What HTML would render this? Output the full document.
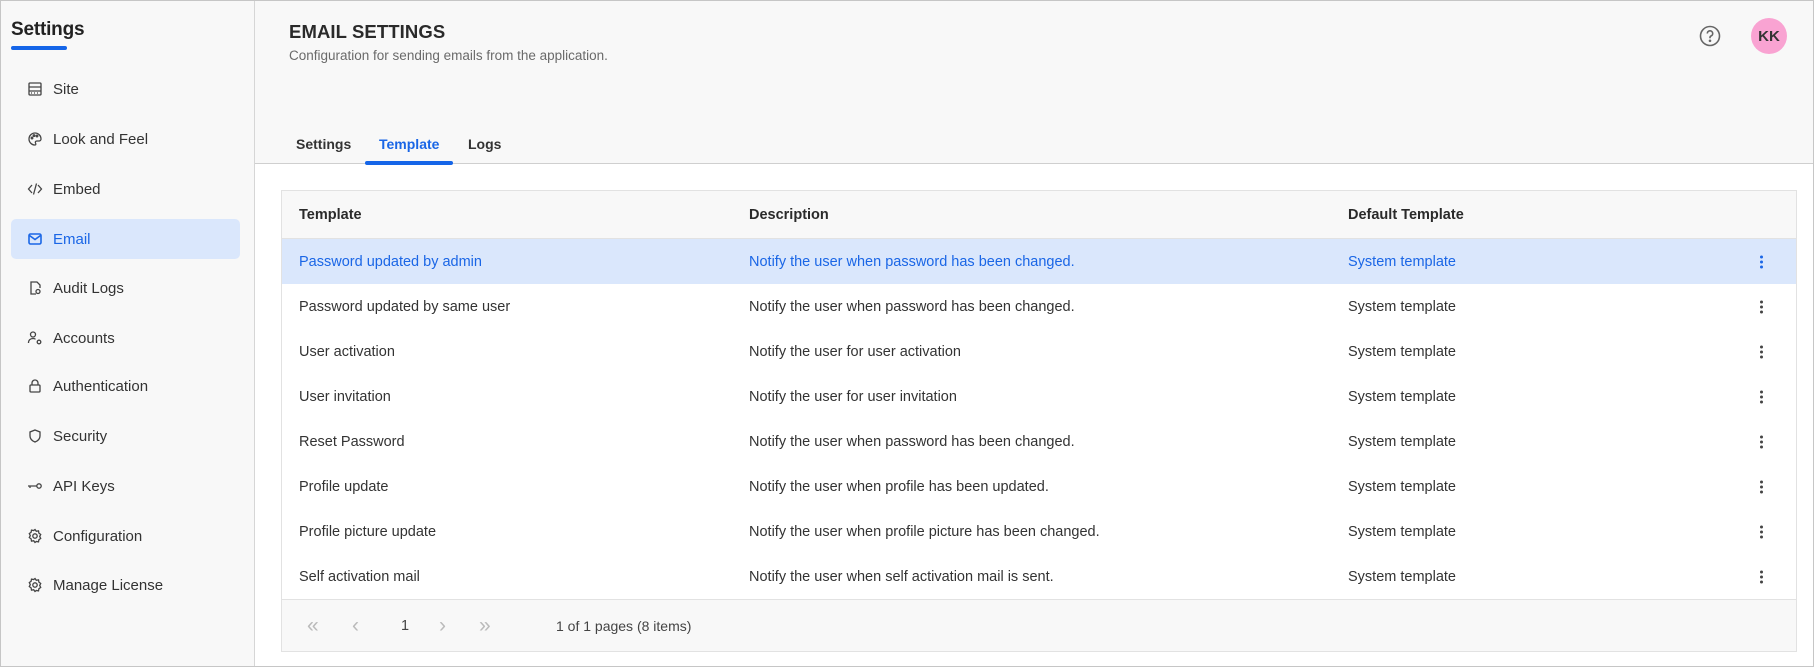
<!DOCTYPE html>
<html><head><meta charset="utf-8"><style>
*{box-sizing:border-box;margin:0;padding:0}
body{width:1814px;height:667px;overflow:hidden;font-family:"Liberation Sans",sans-serif;color:#333;background:#fff;position:relative}
.frame{position:absolute;left:0;top:0;width:1814px;height:667px;border:1px solid #c6c6c6;z-index:10;pointer-events:none}
.side{position:absolute;left:0;top:0;width:255px;height:667px;background:#f8f8f8;border-right:1px solid #d6d6d6}
.side h1{position:absolute;left:11px;top:19px;font-size:19px;font-weight:bold;color:#222;letter-spacing:-.2px}
.uline{position:absolute;left:11px;top:46px;width:56px;height:4px;border-radius:2px;background:#1565e8}
.nav{position:absolute;left:11px;width:229px;height:40px;display:flex;align-items:center;font-size:15px;color:#333}
.nav svg{position:absolute;left:16px;width:16px;height:16px}
.nav span{position:absolute;left:42px}
.nav.act{background:#dae7fc;border-radius:5px;color:#1a66e6}
.head{position:absolute;left:255px;top:0;width:1559px;height:164px;background:#f8f8f8;border-bottom:1px solid #cfcfcf}
.title{position:absolute;left:289px;top:21px;font-size:18.5px;font-weight:bold;color:#2a2a2a;letter-spacing:.1px}
.sub{position:absolute;left:289px;top:48px;font-size:13.5px;color:#6a6a6a}
.tab{position:absolute;top:136px;font-size:14px;font-weight:bold;color:#333}
.tabline{position:absolute;left:365px;top:161px;width:88px;height:4px;border-radius:2px;background:#1565e8}
.tbl{position:absolute;left:281px;top:190px;width:1516px;height:462px;border:1px solid #e2e2e2}
.th{position:absolute;left:0;top:0;width:100%;height:48px;background:#f8f8f8;border-bottom:1px solid #e2e2e2}
.row{position:absolute;left:0;width:100%;height:45px}
.c{position:absolute;top:50%;transform:translateY(-50%);font-size:14.5px;white-space:nowrap}
.th .c{font-weight:bold;color:#2a2a2a}
.row.sel{background:#dae7fc;color:#1a66e6}
.k{position:absolute;left:1478px;top:50%;transform:translateY(-50%);width:3px}
.k i{display:block;width:3px;height:3px;border-radius:50%;background:#444;margin:2px 0}
.row.sel .k i{background:#1a66e6}
.foot{position:absolute;left:0;top:408px;width:100%;height:52px;background:#f8f8f8;border-top:1px solid #e2e2e2}
.pg{position:absolute;top:50%;transform:translateY(-50%);font-size:21px;color:#bbb}
</style></head><body>
<div class="side">
<h1>Settings</h1><div class="uline"></div>
<div class="nav" style="top:69px"><svg viewBox="0 0 16 16" fill="none" stroke="#444" stroke-width="1.3"><rect x="2" y="2" width="12" height="12" rx="1"/><path d="M2 6h12M2 10h12M4 12h1M7 12h1M10 12h1"/></svg><span>Site</span></div>
<div class="nav" style="top:119px"><svg viewBox="0 0 16 16" fill="none" stroke="#444" stroke-width="1.3"><path d="M8 2a6 6 0 1 0 0 12c1 0 1-1 .5-2s0-2 1.5-2h2a2 2 0 0 0 2-2A6 6 0 0 0 8 2z"/><circle cx="5" cy="7" r=".8"/><circle cx="7" cy="4.6" r=".8"/><circle cx="10" cy="5" r=".8"/></svg><span>Look and Feel</span></div>
<div class="nav" style="top:169px"><svg viewBox="0 0 16 16" fill="none" stroke="#444" stroke-width="1.3"><path d="M5 4L1.5 8 5 12M11 4l3.5 4-3.5 4M9.5 2.5l-3 11"/></svg><span>Embed</span></div>
<div class="nav act" style="top:219px"><svg viewBox="0 0 16 16" fill="none" stroke="#1a66e6" stroke-width="1.6"><rect x="2" y="3" width="12" height="10" rx="1.5"/><path d="M2.5 4.5L8 8.5l5.5-4"/></svg><span>Email</span></div>
<div class="nav" style="top:268px"><svg viewBox="0 0 16 16" fill="none" stroke="#444" stroke-width="1.3"><path d="M9 14H4V2h6l3 3v3"/><circle cx="11" cy="11.5" r="2"/></svg><span>Audit Logs</span></div>
<div class="nav" style="top:318px"><svg viewBox="0 0 16 16" fill="none" stroke="#444" stroke-width="1.3"><circle cx="6" cy="4.5" r="2.5"/><path d="M1.5 13c0-3 2-4.5 4.5-4.5 1 0 2 .3 2.5.8"/><circle cx="12" cy="12" r="1.8"/></svg><span>Accounts</span></div>
<div class="nav" style="top:366px"><svg viewBox="0 0 16 16" fill="none" stroke="#444" stroke-width="1.3"><rect x="3" y="7" width="10" height="7" rx="1"/><path d="M5 7V5a3 3 0 0 1 6 0v2"/></svg><span>Authentication</span></div>
<div class="nav" style="top:416px"><svg viewBox="0 0 16 16" fill="none" stroke="#444" stroke-width="1.3"><path d="M8 2l5 2v4c0 3-2.5 5-5 6-2.5-1-5-3-5-6V4z"/></svg><span>Security</span></div>
<div class="nav" style="top:466px"><svg viewBox="0 0 16 16" fill="none" stroke="#444" stroke-width="1.3"><circle cx="12" cy="8" r="2.2"/><path d="M1 8h8.8M3 8v2"/></svg><span>API Keys</span></div>
<div class="nav" style="top:516px"><svg viewBox="0 0 16 16" fill="none" stroke="#444" stroke-width="1.3"><circle cx="8" cy="8" r="2.2"/><path d="M8 1.5l1.3 1.8 2.2-.4.4 2.2 1.8 1.3-1 2 1 2-1.8 1.3-.4 2.2-2.2-.4L8 14.5l-1.3-1.8-2.2.4-.4-2.2L2.3 9.6l1-2-1-2 1.8-1.3.4-2.2 2.2.4z"/></svg><span>Configuration</span></div>
<div class="nav" style="top:565px"><svg viewBox="0 0 16 16" fill="none" stroke="#444" stroke-width="1.3"><circle cx="8" cy="8" r="2.2"/><path d="M8 1.5l1.3 1.8 2.2-.4.4 2.2 1.8 1.3-1 2 1 2-1.8 1.3-.4 2.2-2.2-.4L8 14.5l-1.3-1.8-2.2.4-.4-2.2L2.3 9.6l1-2-1-2 1.8-1.3.4-2.2 2.2.4z"/></svg><span>Manage License</span></div>
</div>
<div class="head"></div>
<div class="title">EMAIL SETTINGS</div>
<div class="sub">Configuration for sending emails from the application.</div>
<svg style="position:absolute;left:1699px;top:25px" width="22" height="22" viewBox="0 0 22 22" fill="none" stroke="#666" stroke-width="1.6"><circle cx="11" cy="11" r="9.5"/><path d="M8.3 8.5a2.7 2.7 0 1 1 3.7 2.5c-.7.3-1 .8-1 1.5v.8"/><circle cx="11" cy="15.8" r=".5" fill="#666"/></svg>
<div style="position:absolute;left:1751px;top:18px;width:36px;height:36px;border-radius:50%;background:#f9a3d2;display:flex;align-items:center;justify-content:center;font-size:15px;font-weight:bold;color:#333">KK</div>
<div class="tab" style="left:296px">Settings</div>
<div class="tab" style="left:379px;color:#1a66e6">Template</div>
<div class="tab" style="left:468px">Logs</div>
<div class="tabline"></div>
<div class="tbl">
<div class="th"><div class="c" style="left:17px">Template</div><div class="c" style="left:467px">Description</div><div class="c" style="left:1066px">Default Template</div></div>
<div class="row sel" style="top:48px"><div class="c" style="left:17px">Password updated by admin</div><div class="c" style="left:467px">Notify the user when password has been changed.</div><div class="c" style="left:1066px">System template</div><div class="k"><i></i><i></i><i></i></div></div>
<div class="row" style="top:93px"><div class="c" style="left:17px">Password updated by same user</div><div class="c" style="left:467px">Notify the user when password has been changed.</div><div class="c" style="left:1066px">System template</div><div class="k"><i></i><i></i><i></i></div></div>
<div class="row" style="top:138px"><div class="c" style="left:17px">User activation</div><div class="c" style="left:467px">Notify the user for user activation</div><div class="c" style="left:1066px">System template</div><div class="k"><i></i><i></i><i></i></div></div>
<div class="row" style="top:183px"><div class="c" style="left:17px">User invitation</div><div class="c" style="left:467px">Notify the user for user invitation</div><div class="c" style="left:1066px">System template</div><div class="k"><i></i><i></i><i></i></div></div>
<div class="row" style="top:228px"><div class="c" style="left:17px">Reset Password</div><div class="c" style="left:467px">Notify the user when password has been changed.</div><div class="c" style="left:1066px">System template</div><div class="k"><i></i><i></i><i></i></div></div>
<div class="row" style="top:273px"><div class="c" style="left:17px">Profile update</div><div class="c" style="left:467px">Notify the user when profile has been updated.</div><div class="c" style="left:1066px">System template</div><div class="k"><i></i><i></i><i></i></div></div>
<div class="row" style="top:318px"><div class="c" style="left:17px">Profile picture update</div><div class="c" style="left:467px">Notify the user when profile picture has been changed.</div><div class="c" style="left:1066px">System template</div><div class="k"><i></i><i></i><i></i></div></div>
<div class="row" style="top:363px"><div class="c" style="left:17px">Self activation mail</div><div class="c" style="left:467px">Notify the user when self activation mail is sent.</div><div class="c" style="left:1066px">System template</div><div class="k"><i></i><i></i><i></i></div></div>
<div class="foot">
<div class="pg" style="left:25px">«</div>
<div class="pg" style="left:70px">‹</div>
<div class="pg" style="left:119px;color:#444;font-size:14.5px">1</div>
<div class="pg" style="left:157px">›</div>
<div class="pg" style="left:197px">»</div>
<div class="pg" style="left:274px;color:#444;font-size:14px">1 of 1 pages (8 items)</div>
</div>
</div>
<div class="frame"></div>
</body></html>
